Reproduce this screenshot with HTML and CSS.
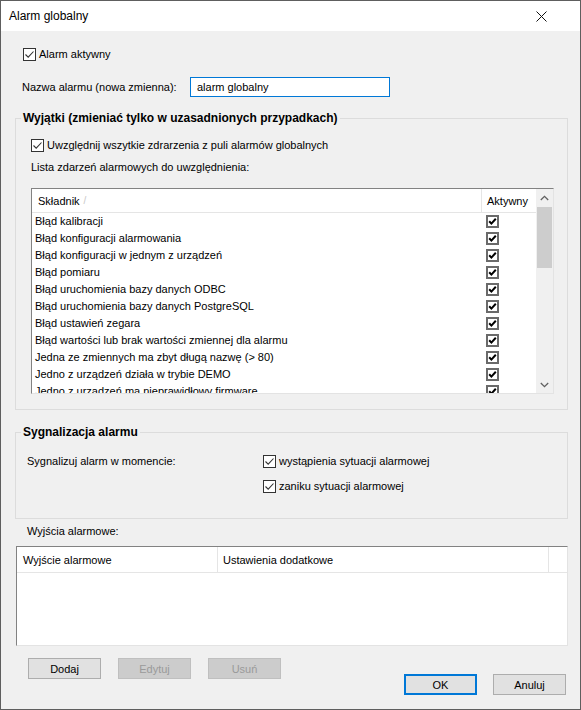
FILE: index.html
```html
<!DOCTYPE html>
<html lang="pl">
<head>
    <meta charset="UTF-8">
    <title>Alarm globalny</title>
    <link rel="stylesheet" href="styles.css">
</head>
<body>
    <div class="window">
        <div class="titlebar">
            <span class="title">Alarm globalny</span>
            <svg class="close" width="11" height="11" viewBox="0 0 11 11">
                <path d="M0.5 0.5 L10.5 10.5 M10.5 0.5 L0.5 10.5" stroke="#111" stroke-width="1" fill="none"/>
            </svg>
        </div>

        <div class="content">
            <label class="check active-check">
                <span class="box"><svg width="11" height="11" viewBox="0 0 11 11"><path d="M1.5 5.5 L4.2 8.2 L9.5 2.5" stroke="#333" stroke-width="1.1" fill="none"/></svg></span>
                Alarm aktywny
            </label>

            <div class="name-row">
                <span class="name-label">Nazwa alarmu (nowa zmienna):</span>
                <div class="textbox">alarm globalny</div>
            </div>

            <fieldset class="group exceptions">
                <legend>Wyjątki (zmieniać tylko w uzasadnionych przypadkach)</legend>
                <label class="check include-check">
                    <span class="box"><svg width="11" height="11" viewBox="0 0 11 11"><path d="M1.5 5.5 L4.2 8.2 L9.5 2.5" stroke="#333" stroke-width="1.1" fill="none"/></svg></span>
                    Uwzględnij wszytkie zdrarzenia z puli alarmów globalnych
                </label>
                <div class="caption">Lista zdarzeń alarmowych do uwzględnienia:</div>

                <div class="listview events">
                    <div class="lv-main">
                        <div class="lv-header">
                            <div class="col-name">Składnik <span class="sort">/</span></div>
                            <div class="col-active">Aktywny</div>
                        </div>
                        <div class="lv-rows" id="eventRows"></div>
                    </div>
                    <div class="scrollbar">
                        <div class="sb-btn">
                            <svg width="9" height="6" viewBox="0 0 9 6"><path d="M0.8 5 L4.5 1.3 L8.2 5" stroke="#606060" stroke-width="1.3" fill="none"/></svg>
                        </div>
                        <div class="sb-track"><div class="sb-thumb"></div></div>
                        <div class="sb-btn">
                            <svg width="9" height="6" viewBox="0 0 9 6"><path d="M0.8 1 L4.5 4.7 L8.2 1" stroke="#606060" stroke-width="1.3" fill="none"/></svg>
                        </div>
                    </div>
                </div>
            </fieldset>

            <fieldset class="group signaling">
                <legend>Sygnalizacja alarmu</legend>
                <div class="signal-row">
                    <span class="signal-label">Sygnalizuj alarm w momencie:</span>
                    <div class="signal-options">
                        <label class="check">
                            <span class="box"><svg width="11" height="11" viewBox="0 0 11 11"><path d="M1.5 5.5 L4.2 8.2 L9.5 2.5" stroke="#333" stroke-width="1.1" fill="none"/></svg></span>
                            wystąpienia sytuacji alarmowej
                        </label>
                        <label class="check">
                            <span class="box"><svg width="11" height="11" viewBox="0 0 11 11"><path d="M1.5 5.5 L4.2 8.2 L9.5 2.5" stroke="#333" stroke-width="1.1" fill="none"/></svg></span>
                            zaniku sytuacji alarmowej
                        </label>
                    </div>
                </div>
            </fieldset>

            <div class="outputs-label">Wyjścia alarmowe:</div>
            <div class="listview outputs">
                <div class="lv-header">
                    <div class="col-output">Wyjście alarmowe</div>
                    <div class="col-settings">Ustawienia dodatkowe</div>
                    <div class="col-filler"></div>
                </div>
            </div>

            <div class="button-bar">
                <div class="left-buttons">
                    <button class="btn">Dodaj</button>
                    <button class="btn" disabled>Edytuj</button>
                    <button class="btn" disabled>Usuń</button>
                </div>
                <div class="right-buttons">
                    <button class="btn default">OK</button>
                    <button class="btn">Anuluj</button>
                </div>
            </div>
        </div>
    </div>

    <script>
        var events = [
            'Błąd kalibracji',
            'Błąd konfiguracji alarmowania',
            'Błąd konfiguracji w jednym z urządzeń',
            'Błąd pomiaru',
            'Błąd uruchomienia bazy danych ODBC',
            'Błąd uruchomienia bazy danych PostgreSQL',
            'Błąd ustawień zegara',
            'Błąd wartości lub brak wartości zmiennej dla alarmu',
            'Jedna ze zmiennych ma zbyt długą nazwę (> 80)',
            'Jedno z urządzeń działa w trybie DEMO',
            'Jedno z urządzeń ma nieprawidłowy firmware'
        ];
        var rows = document.getElementById('eventRows');
        events.forEach(function (name) {
            var row = document.createElement('div');
            row.className = 'lv-row';
            var cell = document.createElement('div');
            cell.className = 'col-name';
            cell.textContent = name;
            var active = document.createElement('div');
            active.className = 'col-active';
            active.innerHTML = '<span class="classic-box"><svg width="9" height="9" viewBox="0 0 9 9"><path d="M1.2 4.2 L3.4 6.6 L7.8 1.8" stroke="#000" stroke-width="2" fill="none"/></svg></span>';
            row.appendChild(cell);
            row.appendChild(active);
            rows.appendChild(row);
        });
    </script>
</body>
</html>
```

FILE: styles.css
```css
* {
    box-sizing: border-box;
}
body {
    margin: 0;
    font-family: "Liberation Sans", Arial, sans-serif;
    font-size: 11px;
    color: #000;
    background-color: #f0f0f0;
}
.window {
    width: 581px;
    height: 710px;
    border: 1px solid #5e5e5e;
    background-color: #f0f0f0;
    overflow: hidden;
}
.titlebar {
    height: 30px;
    background-color: #fff;
    display: flex;
    align-items: center;
    justify-content: space-between;
    padding: 0 33px 0 8px;
    font-size: 12px;
}
.title {
    color: #000;
}
.close {
    display: block;
}
.content {
    padding: 14px 12px 0 14px;
}

/* checkboxes */
.check {
    display: flex;
    align-items: center;
    height: 18px;
    gap: 3px;
}
.box {
    width: 13px;
    height: 13px;
    border: 1px solid #333;
    background-color: #fff;
    display: flex;
    align-items: center;
    justify-content: center;
}
.box svg {
    display: block;
}
.active-check {
    margin-left: 8px;
}

.name-row {
    display: flex;
    align-items: center;
    margin-top: 14px;
    height: 20px;
}
.name-label {
    width: 175px;
    padding-left: 7px;
}
.textbox {
    width: 200px;
    height: 20px;
    border: 1px solid #0078d7;
    background-color: #fff;
    padding-left: 6px;
    line-height: 18px;
}

/* group boxes */
.group {
    margin: 0;
    padding: 0;
    border: 1px solid #dcdcdc;
    min-width: 0;
}
.group legend {
    margin-left: 5px;
    padding: 0 2px;
    font-weight: bold;
    font-size: 12px;
    line-height: 16px;
    color: #000;
}
.exceptions {
    margin-top: 13px;
    padding-bottom: 15px;
}
.include-check {
    margin: 10px 0 0 15px;
}
.caption {
    margin: 5px 0 0 15px;
    line-height: 16px;
}

/* list views */
.listview {
    background-color: #fff;
    border-top: 1px solid #828282;
    border-left: 1px solid #828282;
    border-right: 1px solid #e3e3e3;
    border-bottom: 1px solid #e3e3e3;
    overflow: hidden;
}
.events {
    margin: 13px 0 0 15px;
    width: 523px;
    height: 206px;
    display: flex;
}
.lv-main {
    flex: 1;
    overflow: hidden;
}
.lv-header {
    display: flex;
    height: 24px;
    border-bottom: 1px solid #e5e5e5;
    background-color: #fff;
}
.lv-header > div {
    display: flex;
    align-items: center;
}
.events .col-name {
    width: 450px;
    border-right: 1px solid #e5e5e5;
    padding-left: 6px;
}
.events .col-active {
    flex: 1;
    padding-left: 5px;
}
.sort {
    color: #c8c8c8;
    font-size: 10px;
    margin-left: 4px;
}
.lv-row {
    display: flex;
    height: 17px;
    line-height: 17px;
}
.lv-row .col-name {
    width: 450px;
    padding-left: 3px;
    border-right: 1px solid transparent;
    white-space: nowrap;
}
.lv-row .col-active {
    padding-left: 4px;
    display: flex;
    align-items: center;
}
.classic-box {
    width: 13px;
    height: 13px;
    border: 2px solid #6a6a6a;
    background-color: #fff;
    display: flex;
    align-items: center;
    justify-content: center;
}
.classic-box svg {
    display: block;
}
.scrollbar {
    width: 17px;
    background-color: #f0f0f0;
    display: flex;
    flex-direction: column;
}
.sb-btn {
    height: 17px;
    display: flex;
    align-items: center;
    justify-content: center;
}
.sb-track {
    flex: 1;
    padding: 1px 1px 0 1px;
}
.sb-thumb {
    height: 61px;
    background-color: #cdcdcd;
}

.signaling {
    margin-top: 14px;
    padding-bottom: 23px;
}
.signal-row {
    display: flex;
    margin-top: 12px;
}
.signal-label {
    width: 247px;
    padding-left: 11px;
    line-height: 18px;
}
.signal-options {
    display: flex;
    flex-direction: column;
    gap: 7px;
}

.outputs-label {
    margin: 4px 0 0 12px;
    line-height: 16px;
}
.outputs {
    margin: 7px 0 0 1px;
    height: 100px;
}
.outputs .lv-header {
    height: 26px;
}
.col-output {
    width: 201px;
    padding-left: 6px;
    border-right: 1px solid #e5e5e5;
}
.col-settings {
    width: 331px;
    padding-left: 5px;
    border-right: 1px solid #e5e5e5;
}
.col-filler {
    flex: 1;
    background-color: #fff;
}

/* buttons */
.button-bar {
    display: flex;
    justify-content: space-between;
    margin-top: 12px;
}
.left-buttons {
    display: flex;
    gap: 17px;
    margin-left: 13px;
}
.right-buttons {
    display: flex;
    gap: 16px;
    margin-top: 16px;
    margin-right: 2px;
}
.btn {
    width: 73px;
    height: 21px;
    border: 1px solid #adadad;
    background-color: #e1e1e1;
    font-family: "Liberation Sans", Arial, sans-serif;
    font-size: 11px;
    color: #000;
    padding: 0;
}
.btn:disabled {
    background-color: #cccccc;
    border-color: #bfbfbf;
    color: #9a9a9a;
}
.btn.default {
    border: 2px solid #0078d7;
}
```
